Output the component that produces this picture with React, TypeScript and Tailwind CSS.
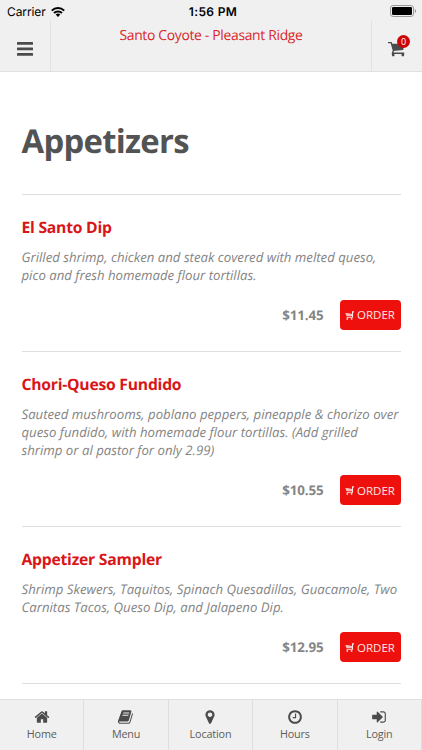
import React from "react";

const home =
  "M1472 992v480q0 26-19 45t-45 19h-384v-384h-256v384h-384q-26 0-45-19t-19-45v-480q0-1 .5-3t.5-3l575-474 575 474q1 2 1 6zm223-69l-62 74q-8 9-21 11h-3q-13 0-21-7l-692-577-692 577q-12 8-24 7-13-2-21-11l-62-74q-8-10-7-23.5t11-21.5l719-599q32-26 76-26t76 26l244 204v-195q0-14 9-23t23-9h192q14 0 23 9t9 23v408l219 182q10 8 11 21.5t-7 23.5z";
const book =
  "M1639 478q40 57 18 129l-275 906q-19 64-76.5 107.5t-122.5 43.5h-923q-77 0-148.5-53.5t-99.5-131.5q-24-67-2-127 0-4 3-27t4-37q1-8-3-21.5t-3-19.5q2-11 8-21t16.5-23.5 16.5-23.5q23-38 45-91.5t30-91.5q3-10 .5-30t-.5-28q3-11 17-28t17-23q21-36 42-92t25-90q1-9-2.5-32t.5-28q4-13 22-30.5t22-22.5q19-26 42.5-84.5t27.5-96.5q1-8-3-25.5t-2-26.5q2-8 9-18t18-23 17-21q8-12 16.5-30.5t15-35 16-36 19.5-32 26.5-23.5 36-11.5 47.5 5.5l-1 3q38-9 51-9h761q74 0 114 56t18 130l-274 906q-36 119-71.5 153.5t-128.5 34.5h-869q-27 0-38 15-11 16-1 43 24 70 144 70h923q29 0 56-15.5t35-41.5l300-987q7-22 5-57 38 15 59 43zm-1064 2q-4 13 2 22.5t20 9.5h608q13 0 25.5-9.5t16.5-22.5l21-64q4-13-2-22.5t-20-9.5h-608q-13 0-25.5 9.5t-16.5 22.5zm-83 256q-4 13 2 22.5t20 9.5h608q13 0 25.5-9.5t16.5-22.5l21-64q4-13-2-22.5t-20-9.5h-608q-13 0-25.5 9.5t-16.5 22.5z";
const marker =
  "M1152 640q0-106-75-181t-181-75-181 75-75 181 75 181 181 75 181-75 75-181zm256 0q0 109-33 179l-364 774q-16 33-47.5 52t-67.5 19-67.5-19-46.5-52l-365-774q-33-70-33-179 0-212 150-362t362-150 362 150 150 362z";
const clock =
  "M1024 544v448q0 14-9 23t-23 9h-320q-14 0-23-9t-9-23v-64q0-14 9-23t23-9h224v-352q0-14 9-23t23-9h64q14 0 23 9t9 23zm416 352q0-148-73-273t-198-198-273-73-273 73-198 198-73 273 73 273 198 198 273 73 273-73 198-198 73-273zm224 0q0 209-103 385.5t-279.5 279.5-385.5 103-385.5-103-279.5-279.5-103-385.5 103-385.5 279.5-279.5 385.5-103 385.5 103 279.5 279.5 103 385.5z";
const signIn =
  "M1312 896q0 26-19 45l-544 544q-19 19-45 19t-45-19-19-45v-288h-448q-26 0-45-19t-19-45v-384q0-26 19-45t45-19h448v-288q0-26 19-45t45-19 45 19l544 544q19 19 19 45zm352-352v704q0 119-84.5 203.5t-203.5 84.5h-320q-13 0-22.5-9.5t-9.5-22.5q0-4-1-20t-.5-26.5 3-23.5 10-19.5 20.5-6.5h320q66 0 113-47t47-113v-704q0-66-47-113t-113-47h-312l-11.5-1-11.5-3-8-5.5-7-9-2-13.5q0-4-1-20t-.5-26.5 3-23.5 10-19.5 20.5-6.5h320q119 0 203.5 84.5t84.5 203.5z";

const tabs = [
  { label: "Home", path: home },
  { label: "Menu", path: book },
  { label: "Location", path: marker },
  { label: "Hours", path: clock },
  { label: "Login", path: signIn },
];

const dishes = [
  {
    name: "El Santo Dip",
    lines: ["Grilled shrimp, chicken and steak covered with melted queso,", "pico and fresh homemade flour tortillas."],
    price: "$11.45",
  },
  {
    name: "Chori-Queso Fundido",
    lines: [
      "Sauteed mushrooms, poblano peppers, pineapple & chorizo over",
      "queso fundido, with homemade flour tortillas. (Add grilled",
      "shrimp or al pastor for only 2.99)",
    ],
    price: "$10.55",
  },
  {
    name: "Appetizer Sampler",
    lines: ["Shrimp Skewers, Taquitos, Spinach Quesadillas, Guacamole, Two", "Carnitas Tacos, Queso Dip, and Jalapeno Dip."],
    price: "$12.95",
  },
];

function Cart({ className }: { className: string }) {
  return (
    <svg viewBox="0 0 17 16" className={className} fill="none" stroke="currentColor">
      <path d="M0 1.6h3.2l2.2 7.8-.9 2.8h11v1.6" strokeWidth="1.4" />
      <path d="M3.4 2.8h13l-1.2 6.2-9.8 1z" fill="currentColor" stroke="none" />
      <circle cx="5.2" cy="14" r="1.4" fill="currentColor" stroke="none" />
      <circle cx="14.8" cy="14" r="1.4" fill="currentColor" stroke="none" />
    </svg>
  );
}

function SmallCart() {
  return (
    <svg viewBox="0 0 9 9" className="h-[9px] w-[9px]" fill="none" stroke="currentColor">
      <path d="M9 .9H7.5V6.3H1.6" strokeWidth="1.1" />
      <path d="M.3 2h2L7 3v1.9H1.4z" fill="currentColor" fillOpacity=".8" stroke="none" />
      <circle cx="2.3" cy="7.9" r=".9" fill="currentColor" stroke="none" />
      <circle cx="6.6" cy="7.9" r=".9" fill="currentColor" stroke="none" />
    </svg>
  );
}

export default function App() {
  return (
    <div className="flex h-[750px] w-[422px] flex-col overflow-hidden bg-white font-['Open_Sans',sans-serif] [text-rendering:geometricPrecision]">
      <header className="h-[72px] shrink-0 border-b border-[#e0e0e0] bg-[#f0f0f0]">
        <div className="grid h-5 grid-cols-3 items-center font-['Inter',sans-serif] text-black">
          <div className="flex items-center gap-[5px] pt-0.5 pl-[7px] text-[12px] leading-5">
            <span className="tracking-[-0.1px]">Carrier</span>
            <svg viewBox="0 0 14 10" className="h-[10px] w-[14px]" fill="none" stroke="currentColor" strokeWidth="2">
              <path d="M.8 3.6a9 9 0 0 1 12.4 0M3 6a5.8 5.8 0 0 1 8 0" />
              <path d="M4.7 7.6a3.3 3.3 0 0 1 4.6 0L7 10z" fill="currentColor" stroke="none" />
            </svg>
          </div>
          <div className="pt-0.5 pl-[4px] text-center text-[12px] leading-5 font-semibold tracking-[0.35px]">1:56 PM</div>
          <div className="flex justify-end pr-[5px]">
            <svg viewBox="0 0 27 12" className="h-3 w-[27px]">
              <rect x=".5" y=".5" width="23" height="11" rx="2.6" fill="none" stroke="#999" />
              <rect x="2" y="2" width="20" height="8" rx="1.3" />
              <path d="M24.8 4v4q1.4-.7 1.4-2t-1.4-2z" fill="#999" />
            </svg>
          </div>
        </div>
        <div className="flex h-[51px]">
          <button className="flex w-[51px] items-center justify-center border-r border-[#e2e2e2] pt-1.5">
            <svg viewBox="0 0 16 14" className="h-[14px] w-4 fill-[#4b4b4b]">
              <rect width="16" height="2.7" rx=".5" />
              <rect y="5.5" width="16" height="2.7" rx=".5" />
              <rect y="11" width="16" height="2.7" rx=".5" />
            </svg>
          </button>
          <h1 className="flex-1 pt-1.5 text-center text-[13.9px] leading-5 tracking-[-0.32px] text-[#d9272a]">Santo Coyote - Pleasant Ridge</h1>
          <button className="relative w-[51px] border-l border-[#e2e2e2] text-[#4b4b4b]">
            <Cart className="mt-[7px] ml-4 h-4 w-[17px]" />
            <span className="absolute top-[15px] left-[25px] flex h-[13px] w-[13px] items-center justify-center rounded-full bg-[#cc0507] text-[9px] leading-none text-white">0</span>
          </button>
        </div>
      </header>

      <main className="min-h-0 flex-1 overflow-hidden px-[21.5px]">
        <h2 className="h-[122px] pt-[45px] text-[32.8px] leading-[48px] font-bold tracking-[-0.7px] text-[#535353]">Appetizers</h2>
        {dishes.map((dish) => (
          <article key={dish.name} className="border-t border-[#dedede] pt-5 pb-[21px]">
            <h3 className="text-[15.7px] leading-6 font-bold tracking-[-0.23px] text-[#d91517]">{dish.name}</h3>
            <p className="mt-[9px] text-[13.2px] leading-[18.2px] whitespace-nowrap text-[#858585] italic">
              {dish.lines.map((line) => (
                <span key={line} className="block">{line}</span>
              ))}
            </p>
            <div className="mt-[15.6px] flex items-center justify-end gap-4">
              <span className="text-[13.4px] font-bold tracking-[-0.15px] text-[#858585]">{dish.price}</span>
              <button className="flex h-[30px] w-[61px] items-center justify-center gap-[3px] rounded-[4px] bg-[#ee100d] text-[11.5px] text-[#ffe6e6]">
                <SmallCart />
                ORDER
              </button>
            </div>
          </article>
        ))}
        <div className="border-t border-[#dedede]" />
      </main>

      <nav className="grid h-[51px] shrink-0 grid-cols-5 border-t border-[#dedede] bg-[#f0f0f0]">
        {tabs.map((tab) => (
          <button key={tab.label} className="flex flex-col items-center border-r border-[#dedede] pt-[9px] text-[#4b4b4b]">
            <svg viewBox="0 0 1792 1792" className="h-4 w-4 fill-current">
              <path d={tab.path} />
            </svg>
            <span className="mt-px text-[10.8px] leading-4 tracking-[-0.15px] text-[#5c5c5c]">{tab.label}</span>
          </button>
        ))}
      </nav>
    </div>
  );
}
